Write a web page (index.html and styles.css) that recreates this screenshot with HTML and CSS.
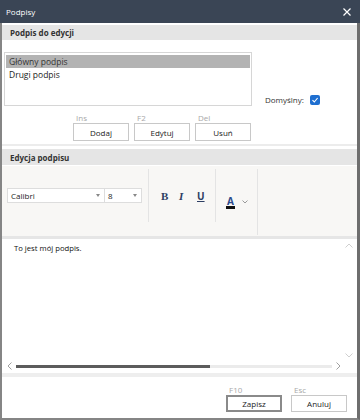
FILE: index.html
```html
<!DOCTYPE html>
<html lang="pl">
<head>
  <meta charset="UTF-8" />
  <title>Podpisy</title>
  <link rel="stylesheet" href="styles.css">
</head>
<body>

<div class="window">
  <!-- Pasek tytułu -->
  <div class="titlebar">
    <span>Podpisy</span>
    <svg class="close" width="8" height="8" viewBox="0 0 8 8">
      <path d="M0.5 0.5 L7.5 7.5 M7.5 0.5 L0.5 7.5" stroke="#fff" stroke-width="1.2"/>
    </svg>
  </div>

  <div class="section-head">Podpis do edycji</div>

  <div class="sig-panel">
    <div class="sig-row">
      <div class="listbox">
        <div class="item selected">Główny podpis</div>
        <div class="item">Drugi podpis</div>
      </div>
      <label class="default">
        Domyślny:
        <span class="check">
          <svg width="8" height="8" viewBox="0 0 8 8"><path d="M1.5 4.2 L3.3 6 L6.6 2" stroke="#fff" stroke-width="1.1" fill="none"/></svg>
        </span>
      </label>
    </div>
    <div class="actions">
      <div class="act"><span class="key">Ins</span><button class="btn">Dodaj</button></div>
      <div class="act"><span class="key">F2</span><button class="btn">Edytuj</button></div>
      <div class="act"><span class="key">Del</span><button class="btn">Usuń</button></div>
    </div>
  </div>

  <div class="section-head tall">Edycja podpisu</div>

  <!-- Pasek narzędzi -->
  <div class="toolbar">
    <div class="group fonts">
      <div class="combo font-name"><span>Calibri</span><i class="caret"></i></div>
      <div class="combo font-size"><span>8</span><i class="caret"></i></div>
    </div>
    <div class="group styles">
      <span class="tb b">B</span>
      <span class="tb i">I</span>
      <span class="tb u">U</span>
    </div>
    <div class="group color">
      <span class="tb a">A</span>
      <svg width="6" height="4" viewBox="0 0 6 4"><path d="M0.5 0.5 L3 3 L5.5 0.5" stroke="#9a9a9a" fill="none"/></svg>
    </div>
  </div>

  <!-- Edytor -->
  <div class="editor">
    <div class="text">To jest mój podpis.</div>
    <div class="vscroll">
      <svg width="8" height="5" viewBox="0 0 8 5"><path d="M0.5 4.5 L4 1 L7.5 4.5" stroke="#cfcfcf" fill="none"/></svg>
      <svg width="8" height="5" viewBox="0 0 8 5"><path d="M0.5 0.5 L4 4 L7.5 0.5" stroke="#cfcfcf" fill="none"/></svg>
    </div>
    <div class="hscroll">
      <svg width="5" height="8" viewBox="0 0 5 8"><path d="M4.5 0.5 L1 4 L4.5 7.5" stroke="#a0a0a0" fill="none"/></svg>
      <div class="track"><div class="thumb"></div></div>
      <svg width="5" height="8" viewBox="0 0 5 8"><path d="M0.5 0.5 L4 4 L0.5 7.5" stroke="#a0a0a0" fill="none"/></svg>
    </div>
  </div>

  <div class="footer">
    <div class="act"><span class="key">F10</span><button class="btn small primary">Zapisz</button></div>
    <div class="act"><span class="key">Esc</span><button class="btn small">Anuluj</button></div>
  </div>
</div>

</body>
</html>
```

FILE: styles.css
```css
* {
  margin: 0;
  padding: 0;
  box-sizing: border-box;
}

body {
  font-family: "Open Sans", "Noto Sans", sans-serif;
  font-size: 8px;
  color: #222;
  background: #fff;
}

.window {
  width: 360px;
  height: 420px;
  border-left: 2px solid #858585;
  border-right: 3px solid #6e6e6e;
  border-bottom: 2px solid #858585;
  display: flex;
  flex-direction: column;
  background: #fff;
}

.titlebar {
  flex: none;
  height: 23px;
  margin: 0 -3px 0 -2px;
  padding: 0 9px 0 6px;
  background: #3a4555;
  color: #fff;
  font-size: 8px;
  display: flex;
  align-items: center;
  justify-content: space-between;
}

.section-head {
  flex: none;
  margin-top: 2px;
  height: 15px;
  background: #e5e5e5;
  font-weight: bold;
  padding-left: 8px;
  display: flex;
  align-items: center;
  color: #333;
}

.section-head.tall {
  margin-top: 3px;
  height: 16px;
}

.sig-panel {
  flex: none;
  padding: 12px 0 0 2px;
  height: 106px;
  border-bottom: 2px solid #ececec;
}

.sig-row {
  display: flex;
  align-items: flex-end;
}

.listbox {
  width: 248px;
  height: 54px;
  border: 1px solid #d6d6d6;
  padding: 2px 1px;
  font-size: 8.5px;
}

.item {
  height: 13px;
  line-height: 13px;
  padding-left: 3px;
}

.item.selected {
  background: #b3b3b3;
  color: #333;
}

.default {
  display: flex;
  align-items: center;
  gap: 6px;
  margin-left: 13px;
  margin-bottom: 1px;
  color: #333;
}

.check {
  width: 10px;
  height: 10px;
  border-radius: 2px;
  background: #1f6fd0;
  display: flex;
  align-items: center;
  justify-content: center;
}

.actions {
  display: flex;
  gap: 5px;
  margin: 6px 0 0 69px;
}

.act {
  display: flex;
  flex-direction: column;
}

.key {
  color: #a8a8a8;
  padding-left: 3px;
  height: 11px;
  line-height: 11px;
}

.btn {
  width: 56px;
  height: 18px;
  border: 1px solid #c8c8c8;
  background: #fff;
  font-family: inherit;
  font-size: 8px;
  color: #222;
}

.btn.small {
  height: 17px;
}

.btn.primary {
  border: 2px solid #8a8a8a;
}

.toolbar {
  flex: none;
  margin-top: 1px;
  height: 73px;
  background: #f8f7f5;
  border-bottom: 3px solid #e6e6e6;
  display: flex;
}

.group {
  border-right: 1px solid #e4e4e4;
  margin-top: 3px;
  display: flex;
  align-items: center;
}

.fonts {
  padding: 0 6px 0 5px;
  height: 53px;
}

.combo {
  height: 15px;
  border: 1px solid #ddd;
  background: #fff;
  display: flex;
  align-items: center;
  justify-content: space-between;
  padding: 0 4px 0 3px;
}

.font-name { width: 98px; }
.font-size { width: 38px; margin-left: -1px; }

.caret {
  border-left: 2px solid transparent;
  border-right: 2px solid transparent;
  border-top: 3px solid #888;
}

.styles {
  height: 53px;
  padding-left: 12px;
}

.tb {
  width: 18px;
  font-family: "Liberation Serif", serif;
  font-size: 11px;
  font-weight: bold;
  color: #2d3e63;
}

.tb.i { font-style: italic; }

.tb.u {
  font-family: "Open Sans", sans-serif;
  font-size: 10px;
  text-decoration: underline;
}

.color {
  height: 66px;
  padding: 0 9px 0 10px;
  gap: 7px;
}

.tb.a {
  width: auto;
  font-family: "Open Sans", sans-serif;
  font-size: 10px;
  line-height: 10px;
  color: #2a4a8c;
  border-bottom: 3px solid #111;
  padding: 0 1px;
}

.editor {
  position: relative;
  flex: 1;
  border-bottom: 4px solid #eeeeee;
}

.text {
  padding: 4px 0 0 12px;
  font-size: 7.7px;
  color: #111;
}

.vscroll {
  position: absolute;
  right: 4px;
  top: 4px;
  bottom: 15px;
  display: flex;
  flex-direction: column;
  justify-content: space-between;
}

.hscroll {
  position: absolute;
  left: 5px;
  right: 16px;
  bottom: 3px;
  height: 8px;
  display: flex;
  align-items: center;
  gap: 4px;
}

.track {
  flex: 1;
  height: 3px;
  background: #ebebeb;
}

.thumb {
  width: 194px;
  height: 3px;
  background: #5c5c5c;
}

.footer {
  flex: none;
  height: 41px;
  display: flex;
  justify-content: flex-end;
  gap: 9px;
  padding: 7px 10px 0 0;
}
```
